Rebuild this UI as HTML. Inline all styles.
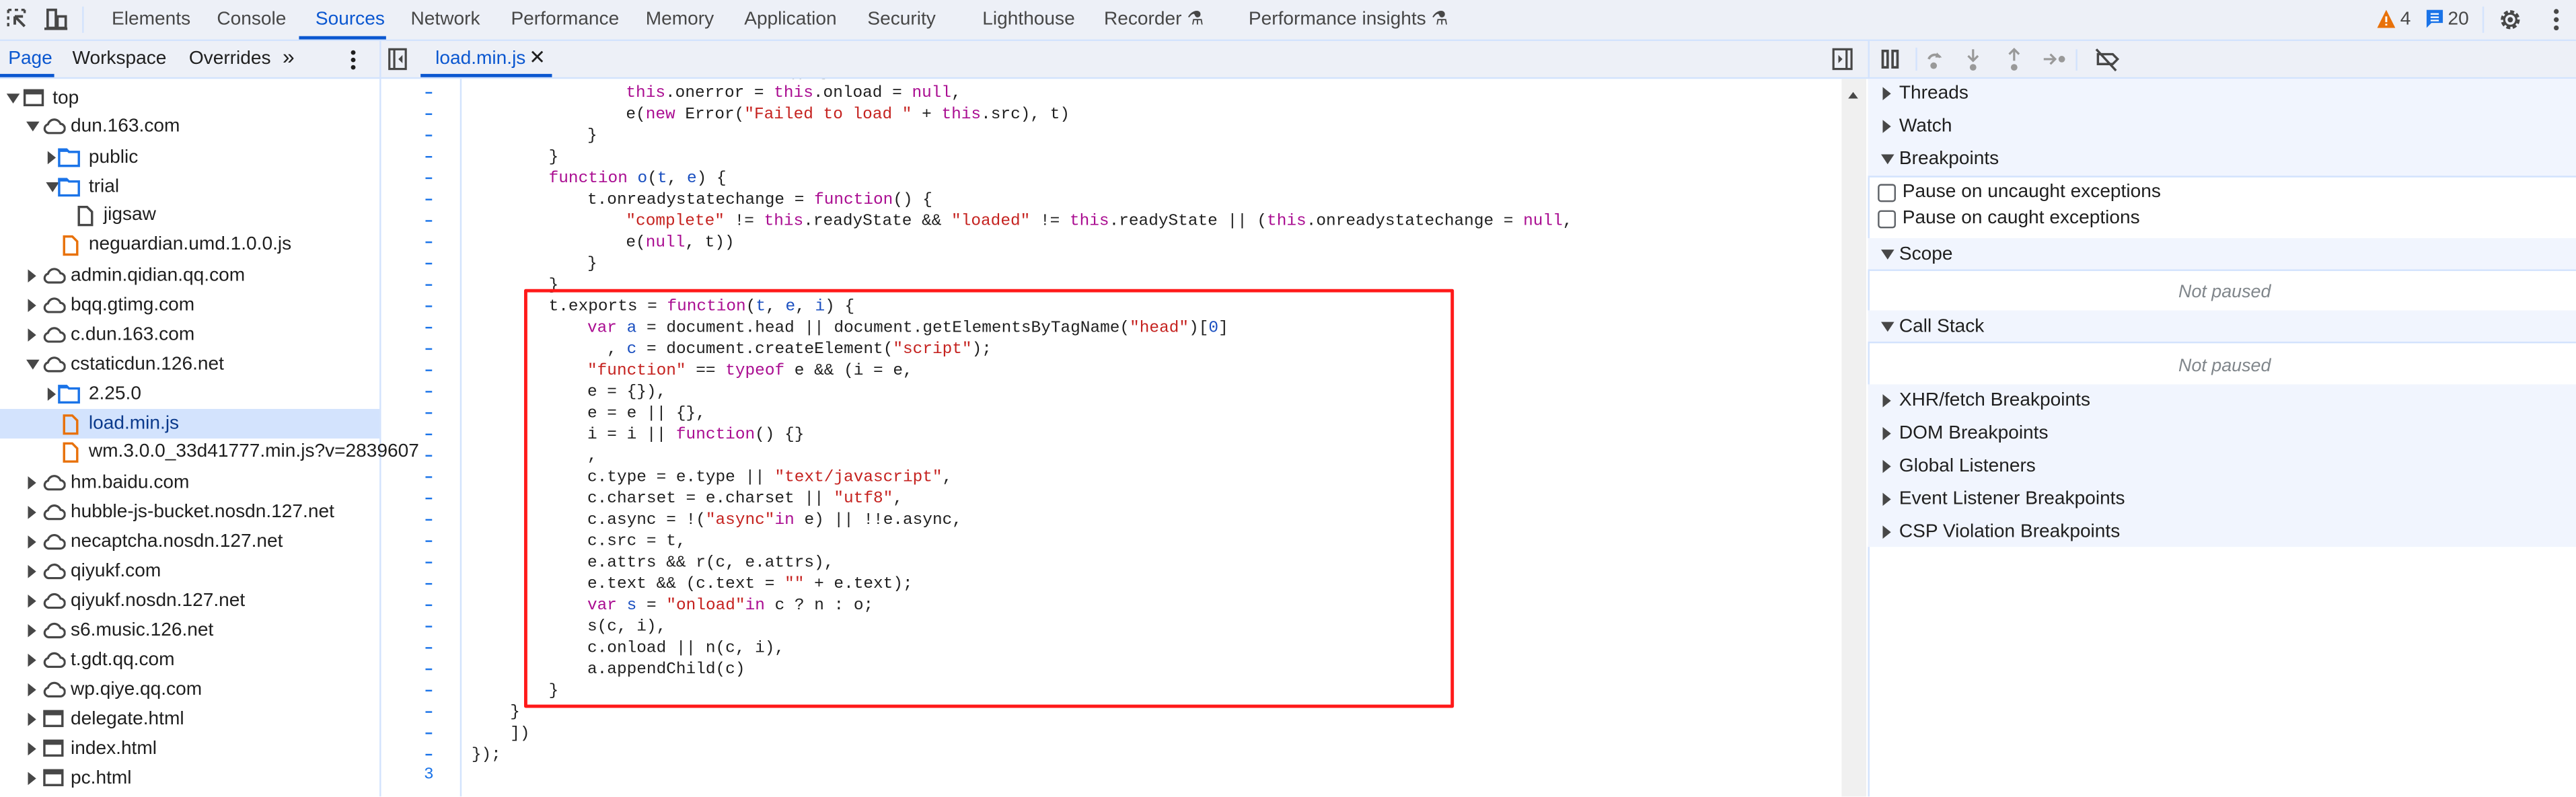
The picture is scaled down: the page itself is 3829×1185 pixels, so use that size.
<!DOCTYPE html>
<html><head><meta charset="utf-8"><style>
html,body{margin:0;padding:0;width:3829px;height:1185px;overflow:hidden;background:#fff}
#w{position:absolute;left:0;top:0;width:1568px;height:485.3px;transform:scale(2.44196);transform-origin:0 0;font-family:"Liberation Sans",sans-serif;font-size:11.5px;color:#1f1f1f;background:#fff;overflow:hidden}
.a{position:absolute;white-space:nowrap}
.t{position:absolute;white-space:nowrap;line-height:14px}
.code{position:absolute;font-family:"Liberation Mono",monospace;font-size:10px;line-height:13px;white-space:pre;color:#1f1f1f}
.k{color:#aa0d91}.s{color:#c5221f}.v{color:#1a4fc0}
.ln{position:absolute;left:258px;width:8px;height:2px;background:#1a73e8}
.row{position:absolute;left:0;width:231px;height:18px}
.sec{position:absolute;left:1137px;width:431px;height:20px;background:#f1f5fe}
.tri{position:absolute;width:0;height:0}
.tr{border-top:4px solid transparent;border-bottom:4px solid transparent;border-left:5px solid #474747}
.td{border-left:4px solid transparent;border-right:4px solid transparent;border-top:6px solid #474747}
</style></head><body><div id="w">
<div class="a" style="left:0;top:0;width:1568px;height:24px;background:#edf0f7;border-bottom:1px solid #d3e3fd"></div>
<svg class="a" style="left:4px;top:5px" width="14" height="14" viewBox="0 0 14 14"><path d="M1 1h2M5 1h2M9 1h2M1 1v2M1 5v2M1 9v2M11 1v2" stroke="#474747" stroke-width="1.4" fill="none"/><path d="M5 5l6 6M5 5v5M5 5h5" stroke="#474747" stroke-width="1.6" fill="none"/></svg>
<svg class="a" style="left:27px;top:5px" width="16" height="14" viewBox="0 0 16 14"><rect x="2" y="1" width="5" height="11" fill="none" stroke="#474747" stroke-width="1.5"/><rect x="8" y="5" width="5" height="7" fill="none" stroke="#474747" stroke-width="1.5"/><path d="M0 12.5h14" stroke="#474747" stroke-width="1.5"/></svg>
<div class="a" style="left:50px;top:4px;width:1px;height:16px;background:#d3e3fd"></div>
<div class="t" style="left:68px;top:5px;color:#474747">Elements</div>
<div class="t" style="left:132px;top:5px;color:#474747">Console</div>
<div class="t" style="left:192px;top:5px;color:#0b57d0">Sources</div>
<div class="a" style="left:182px;top:22px;width:53px;height:2px;background:#0b57d0"></div>
<div class="t" style="left:250px;top:5px;color:#474747">Network</div>
<div class="t" style="left:311px;top:5px;color:#474747">Performance</div>
<div class="t" style="left:393px;top:5px;color:#474747">Memory</div>
<div class="t" style="left:453px;top:5px;color:#474747">Application</div>
<div class="t" style="left:528px;top:5px;color:#474747">Security</div>
<div class="t" style="left:598px;top:5px;color:#474747">Lighthouse</div>
<div class="t" style="left:672px;top:5px;color:#474747">Recorder ⚗</div>
<div class="t" style="left:760px;top:5px;color:#474747">Performance insights ⚗</div>
<svg class="a" style="left:1447px;top:6px" width="11" height="11" viewBox="0 0 11 11"><path d="M5.5 0L11 11H0z" fill="#e8710a"/><path d="M5.5 4v3.5M5.5 8.5v1" stroke="#fff" stroke-width="1.2"/></svg>
<div class="t" style="left:1461px;top:5px;color:#474747">4</div>
<svg class="a" style="left:1477px;top:6px" width="10" height="11" viewBox="0 0 10 11"><path d="M0 0h10v8H3l-3 3z" fill="#1a73e8"/><path d="M2.5 2.5h5M2.5 4.5h5M2.5 6.5h5" stroke="#fff" stroke-width="0.9"/></svg>
<div class="t" style="left:1490px;top:5px;color:#474747">20</div>
<div class="a" style="left:1511px;top:4px;width:1px;height:16px;background:#d3e3fd"></div>
<svg class="a" style="left:1521px;top:5px" width="14" height="14" viewBox="0 0 14 14"><circle cx="7" cy="7" r="4.5" fill="none" stroke="#474747" stroke-width="2.6" stroke-dasharray="2.2 1.3"/><circle cx="7" cy="7" r="3.7" fill="none" stroke="#474747" stroke-width="1.3"/><circle cx="7" cy="7" r="1.6" fill="#474747"/></svg>
<svg class="a" style="left:1554px;top:5px" width="4" height="14"><circle cx="2" cy="2" r="1.5" fill="#474747"/><circle cx="2" cy="7" r="1.5" fill="#474747"/><circle cx="2" cy="12" r="1.5" fill="#474747"/></svg>

<div class="a" style="left:0;top:25px;width:1568px;height:22px;background:#edf0f7;border-bottom:1px solid #d3e3fd"></div>
<div class="t" style="left:5px;top:29px;color:#0b57d0">Page</div>
<div class="a" style="left:0;top:45px;width:33px;height:2px;background:#0b57d0"></div>
<div class="t" style="left:44px;top:29px;color:#1f1f1f">Workspace</div>
<div class="t" style="left:115px;top:29px;color:#1f1f1f">Overrides</div>
<div class="t" style="left:172px;top:28px;color:#1f1f1f;font-size:13px">»</div>
<svg class="a" style="left:213px;top:30px" width="4" height="13"><circle cx="2" cy="2" r="1.4" fill="#1f1f1f"/><circle cx="2" cy="6.5" r="1.4" fill="#1f1f1f"/><circle cx="2" cy="11" r="1.4" fill="#1f1f1f"/></svg>
<div class="a" style="left:231px;top:25px;width:1px;height:460px;background:#d3e3fd"></div>
<svg class="a" style="left:236px;top:29px" width="12" height="14" viewBox="0 0 12 14"><rect x="1" y="1" width="10" height="12" fill="none" stroke="#474747" stroke-width="1.3"/><path d="M4 1v12" stroke="#474747" stroke-width="1.3"/><path d="M9 4.5L6.5 7 9 9.5z" fill="#474747"/></svg>
<div class="t" style="left:265px;top:29px;color:#0b57d0">load.min.js</div>
<div class="t" style="left:322px;top:28px;color:#1f1f1f;font-size:12px">✕</div>
<div class="a" style="left:256px;top:45px;width:80px;height:2px;background:#0b57d0"></div>
<svg class="a" style="left:1115px;top:29px" width="13" height="14" viewBox="0 0 13 14"><rect x="1" y="1" width="11" height="12" fill="none" stroke="#474747" stroke-width="1.3"/><path d="M9 1v12" stroke="#474747" stroke-width="1.3"/><path d="M4 4.5L6.5 7 4 9.5z" fill="#474747"/></svg>
<div class="a" style="left:1137px;top:25px;width:1px;height:460px;background:#d3e3fd"></div>
<svg class="a" style="left:1144px;top:29px" width="160" height="15" viewBox="0 0 160 15">
<rect x="2" y="2" width="3" height="10" fill="none" stroke="#474747" stroke-width="1.5"/><rect x="8" y="2" width="3" height="10" fill="none" stroke="#474747" stroke-width="1.5"/>
<path d="M30 7a4 4 0 0 1 7-1" fill="none" stroke="#999" stroke-width="1.5"/><path d="M35 3l3 3-4 0z" fill="#999"/><circle cx="33" cy="11" r="2" fill="#999"/>
<path d="M57 1v7M54 5l3 3 3-3" fill="none" stroke="#999" stroke-width="1.3"/><circle cx="57" cy="12" r="2" fill="#999"/>
<path d="M82 8V1M79 4l3-3 3 3" fill="none" stroke="#999" stroke-width="1.3"/><circle cx="82" cy="12" r="2" fill="#999"/>
<path d="M100 7h7M104 4l3 3-3 3" fill="none" stroke="#999" stroke-width="1.3"/><circle cx="111" cy="7" r="2" fill="#999"/>
<path d="M120 1v13" stroke="#d3e3fd"/>
<path d="M133 4h9l3 3-3 3h-9z" fill="none" stroke="#474747" stroke-width="1.4"/><path d="M132 1l12 13" stroke="#474747" stroke-width="1.4"/>
</svg>
<div class="a" style="left:1166px;top:29px;width:1px;height:14px;background:#d3e3fd"></div>

<div class="row" style="top:249px;background:#d3e3fd"></div>
<div id="tree"></div>

<div class="a" style="left:280px;top:48px;width:1px;height:437px;background:#d3e3fd"></div>
<div class="a" style="left:1121px;top:48px;width:15px;height:437px;background:#f0f0f0"></div>
<div class="tri" style="left:1125px;top:56px;border-left:3px solid transparent;border-right:3px solid transparent;border-bottom:4px solid #474747"></div>
<div class="a" style="left:281px;top:48px;width:400px;height:3px;overflow:hidden"><div class="code" style="left:198px;top:-10px">() {</div></div>
<div id="code"></div>
<div class="a" style="left:319px;top:176px;width:562px;height:251px;border:2px solid #ff1a1a;border-radius:1px"></div>

<div class="sec" style="top:48px;height:60px;"></div>
<div class="a" style="left:1137px;top:107px;width:431px;height:1px;background:#d3e3fd"></div>
<div class="sec" style="top:145px;height:19px"></div>
<div class="a" style="left:1137px;top:164px;width:431px;height:1px;background:#d3e3fd"></div>
<div class="sec" style="top:189px;height:19px"></div>
<div class="a" style="left:1137px;top:208px;width:431px;height:1px;background:#d3e3fd"></div>
<div class="sec" style="top:234px;height:99px"></div>
<div id="rs"></div>
<div class="a" style="left:1143px;top:112px;width:9px;height:9px;border:1px solid #5f6368;border-radius:2px;background:#fff"></div>
<div class="t" style="left:1158px;top:110px">Pause on uncaught exceptions</div>
<div class="a" style="left:1143px;top:128px;width:9px;height:9px;border:1px solid #5f6368;border-radius:2px;background:#fff"></div>
<div class="t" style="left:1158px;top:126px">Pause on caught exceptions</div>
<div class="t" style="left:1326px;top:171px;color:#80868b;font-style:italic;font-size:11px">Not paused</div>
<div class="t" style="left:1326px;top:216px;color:#80868b;font-style:italic;font-size:11px">Not paused</div>
</div>
<script>
(function(){
var T=document.getElementById('tree'),h='';
var ic={
frame:'<svg width="13" height="11" viewBox="0 0 13 11"><rect x="1" y="1" width="11" height="9" fill="none" stroke="#474747" stroke-width="1.4"/><path d="M1 2.5h11" stroke="#474747" stroke-width="2"/></svg>',
cloud:'<svg width="14" height="11" viewBox="0 0 14 11"><path d="M3.5 10h7a2.8 2.8 0 0 0 .3-5.6A4 4 0 0 0 3.2 4.7 2.7 2.7 0 0 0 3.5 10z" fill="none" stroke="#474747" stroke-width="1.3"/></svg>',
folder:'<svg width="14" height="12" viewBox="0 0 14 12"><path d="M1 1h4.5l1.5 1.5h6V11H1z" fill="none" stroke="#1a73e8" stroke-width="1.4"/><path d="M1 1h4.5l1.5 1.5H1z" fill="#1a73e8"/></svg>',
file:'<svg width="10" height="13" viewBox="0 0 10 13"><path d="M1 1h5l3 3v8H1z" fill="none" stroke="#474747" stroke-width="1.4"/></svg>',
js:'<svg width="10" height="13" viewBox="0 0 10 13"><path d="M1 1h5l3 3v8H1z" fill="none" stroke="#e8710a" stroke-width="1.4"/></svg>'};
var rows=[[0,'d','frame','top'],[1,'d','cloud','dun.163.com'],[2,'r','folder','public'],[2,'d','folder','trial'],[3,'','file','jigsaw'],[2,'','js','neguardian.umd.1.0.0.js'],[1,'r','cloud','admin.qidian.qq.com'],[1,'r','cloud','bqq.gtimg.com'],[1,'r','cloud','c.dun.163.com'],[1,'d','cloud','cstaticdun.126.net'],[2,'r','folder','2.25.0'],[2,'','js','load.min.js'],[2,'','js','wm.3.0.0_33d41777.min.js?v=2839607'],[1,'r','cloud','hm.baidu.com'],[1,'r','cloud','hubble-js-bucket.nosdn.127.net'],[1,'r','cloud','necaptcha.nosdn.127.net'],[1,'r','cloud','qiyukf.com'],[1,'r','cloud','qiyukf.nosdn.127.net'],[1,'r','cloud','s6.music.126.net'],[1,'r','cloud','t.gdt.qq.com'],[1,'r','cloud','wp.qiye.qq.com'],[1,'r','frame','delegate.html'],[1,'r','frame','index.html'],[1,'r','frame','pc.html']];
var ys=[60,77,96,114,131,149,168,186,204,222,240,258,275,294,312,330,348,366,384,402,420,438,456,474];
var ax=[5,17,29,41];
rows.forEach(function(r,i){var y=ys[i],l=r[0];
var icx=l==0?14:(l==1?26:(l==2?(r[2]=='js'?38:35):47));
if(r[1]=='r')h+='<div class="tri tr" style="left:'+ax[l]+'px;top:'+(y-4)+'px"></div>';
if(r[1]=='d')h+='<div class="tri td" style="left:'+(ax[l]-1)+'px;top:'+(y-3)+'px"></div>';
h+='<div class="a" style="left:'+icx+'px;top:'+(y-6.5)+'px;line-height:0">'+ic[r[2]]+'</div>';
var tx=l==0?32:(l==1?43:(l==2?54:63));
h+='<div class="t" style="left:'+tx+'px;top:'+(y-7)+'px;'+(i==11?'color:#0b3a8c':'')+'">'+r[3]+'</div>';});
T.innerHTML=h;
var K=function(s){return '<span class="k">'+s+'</span>'},S=function(s){return '<span class="s">'+s+'</span>'},V=function(s){return '<span class="v">'+s+'</span>'};
var L=[
[4,K('this')+'.onerror = '+K('this')+'.onload = '+K('null')+','],
[4,'e('+K('new')+' Error('+S('"Failed to load "')+' + '+K('this')+'.src), t)'],
[3,'}'],[2,'}'],
[2,K('function')+' '+V('o')+'('+V('t')+', '+V('e')+') {'],
[3,'t.onreadystatechange = '+K('function')+'() {'],
[4,S('"complete"')+' != '+K('this')+'.readyState &amp;&amp; '+S('"loaded"')+' != '+K('this')+'.readyState || ('+K('this')+'.onreadystatechange = '+K('null')+','],
[4,'e('+K('null')+', t))'],
[3,'}'],[2,'}'],
[2,'t.exports = '+K('function')+'('+V('t')+', '+V('e')+', '+V('i')+') {'],
[3,K('var')+' '+V('a')+' = document.head || document.getElementsByTagName('+S('"head"')+')['+V('0')+']'],
[3,'  , '+V('c')+' = document.createElement('+S('"script"')+');'],
[3,S('"function"')+' == '+K('typeof')+' e &amp;&amp; (i = e,'],
[3,'e = {}),'],[3,'e = e || {},'],
[3,'i = i || '+K('function')+'() {}'],[3,','],
[3,'c.type = e.type || '+S('"text/javascript"')+','],
[3,'c.charset = e.charset || '+S('"utf8"')+','],
[3,'c.async = !('+S('"async"')+K('in')+' e) || !!e.async,'],
[3,'c.src = t,'],[3,'e.attrs &amp;&amp; r(c, e.attrs),'],
[3,'e.text &amp;&amp; (c.text = '+S('""')+' + e.text);'],
[3,K('var')+' '+V('s')+' = '+S('"onload"')+K('in')+' c ? n : o;'],
[3,'s(c, i),'],[3,'c.onload || n(c, i),'],[3,'a.appendChild(c)'],
[2,'}'],[1,'}'],[1,'])'],[0,'});']];
var c='';
L.forEach(function(l,i){var y=57+i*13;c+='<div class="code" style="left:'+(287+l[0]*23.5)+'px;top:'+(y-6.5)+'px">'+l[1]+'</div>';c+='<div class="ln" style="top:'+(y-1)+'px;left:259px;width:4px;height:1.3px"></div>';});
c+='<div class="code" style="left:258px;top:465.5px;color:#1a73e8">3</div>';
document.getElementById('code').innerHTML=c;
var R=[['r','Threads',57],['r','Watch',77],['d','Breakpoints',97],['d','Scope',155],['d','Call Stack',199],['r','XHR/fetch Breakpoints',244],['r','DOM Breakpoints',264],['r','Global Listeners',284],['r','Event Listener Breakpoints',304],['r','CSP Violation Breakpoints',324]];
var r='';R.forEach(function(x){r+='<div class="tri '+(x[0]=='r'?'tr':'td')+'" style="left:'+(x[0]=='r'?1146:1145)+'px;top:'+(x[2]-(x[0]=='r'?4:3))+'px"></div><div class="t" style="left:1156px;top:'+(x[2]-7)+'px">'+x[1]+'</div>';});
document.getElementById('rs').innerHTML=r;
})();
</script>
</body></html>
